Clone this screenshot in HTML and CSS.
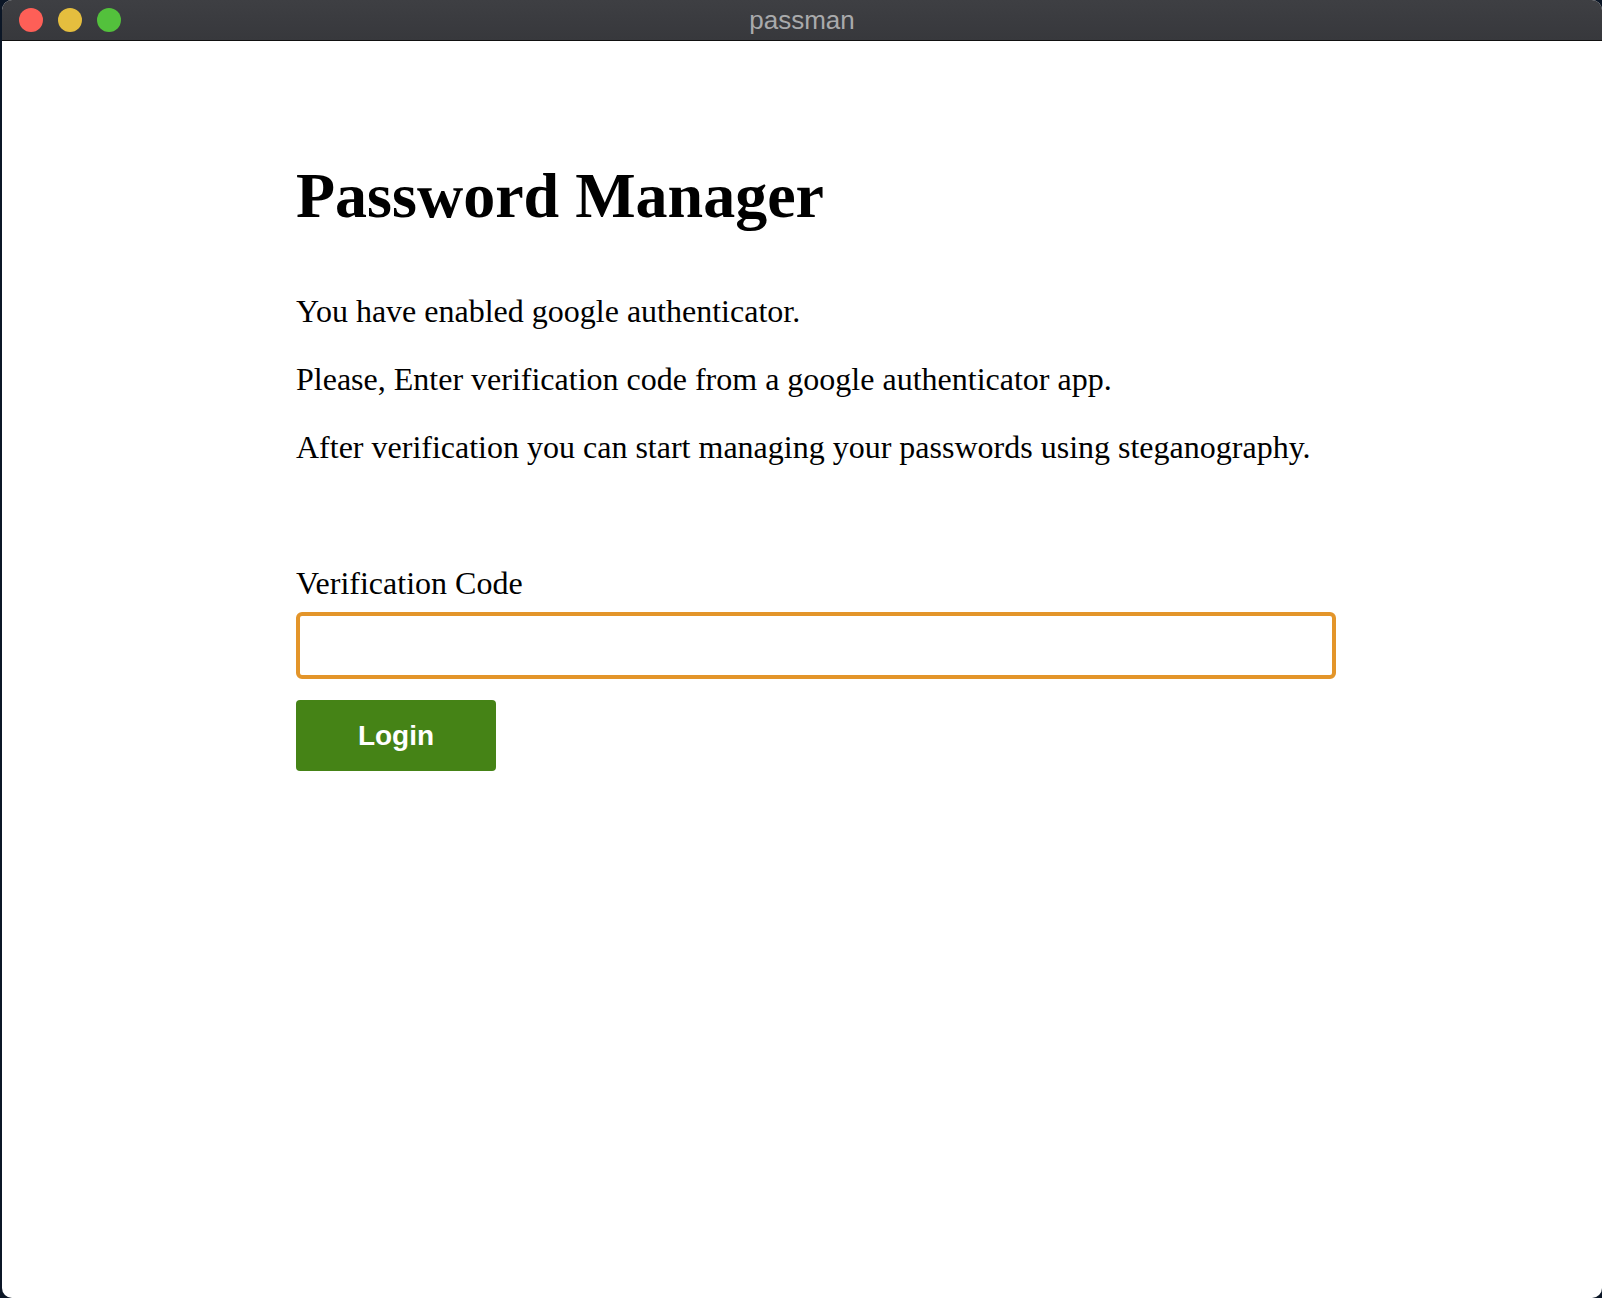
FILE: index.html
```html
<!DOCTYPE html>
<html>
<head>
<meta charset="utf-8">
<title>passman</title>
<link rel="stylesheet" href="styles.css">
</head>
<body>
<div class="window">
  <div class="titlebar">
    <div class="lights">
      <span class="light red"></span>
      <span class="light yellow"></span>
      <span class="light green"></span>
    </div>
    <div class="title">passman</div>
  </div>
  <main class="content">
    <h1 class="heading">Password Manager</h1>
    <p class="text">You have enabled google authenticator.</p>
    <p class="text">Please, Enter verification code from a google authenticator app.</p>
    <p class="text">After verification you can start managing your passwords using steganography.</p>
    <form class="form">
      <label class="label" for="code">Verification Code</label>
      <input class="input" id="code" type="text">
      <button class="btn" type="button">Login</button>
    </form>
  </main>
</div>
</body>
</html>
```

FILE: styles.css
```css
html, body {
  margin: 0;
  padding: 0;
  height: 100%;
}
body {
  background: #0b1626;
  overflow: hidden;
}
.window {
  margin-left: 2px;
  height: 1298px;
  background: #ffffff;
  border-radius: 10px;
  overflow: hidden;
  display: flex;
  flex-direction: column;
}
.titlebar {
  height: 40px;
  flex: 0 0 40px;
  background: linear-gradient(#3e3f43, #37383c);
  border-bottom: 1px solid #111;
  position: relative;
  display: flex;
  align-items: center;
  justify-content: center;
}
.lights {
  position: absolute;
  left: 17px;
  top: 8px;
  display: flex;
  gap: 15px;
}
.light {
  width: 24px;
  height: 24px;
  border-radius: 50%;
  display: block;
}
.red { background: #fe5f57; }
.yellow { background: #e5be3e; }
.green { background: #53c13c; }
.title {
  font-family: "Liberation Sans", Arial, sans-serif;
  font-size: 26px;
  color: #a9aaac;
  margin-top: 0px;
}
.content {
  padding: 118px 0 0 294px;
  font-family: "Liberation Serif", "Times New Roman", serif;
  color: #000;
}
.heading {
  font-size: 64px;
  font-weight: bold;
  margin: 0 0 60px 0;
  line-height: 74px;
}
.text {
  font-size: 32px;
  margin: 0 0 31px 0;
  line-height: 37px;
}
.form {
  margin-top: 99px;
  display: flex;
  flex-direction: column;
  align-items: flex-start;
}
.label {
  font-size: 32px;
  line-height: 37px;
  margin-bottom: 10px;
}
.input {
  box-sizing: border-box;
  width: 1040px;
  height: 67px;
  border: 4px solid #e3952a;
  border-radius: 6px;
  outline: none;
  background: #fff;
  margin: 0 0 21px 0;
}
.btn {
  width: 200px;
  height: 71px;
  background: #458316;
  color: #fff;
  border: none;
  border-radius: 4px;
  font-family: "Liberation Sans", Arial, sans-serif;
  font-size: 28px;
  font-weight: bold;
  padding: 0;
}
```
